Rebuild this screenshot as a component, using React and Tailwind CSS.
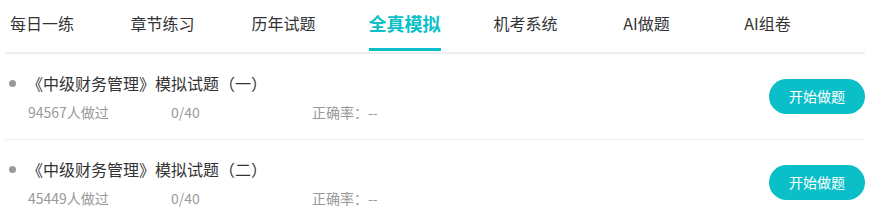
import React from 'react';

const tabs = ['每日一练', '章节练习', '历年试题', '全真模拟', '机考系统', 'AI做题', 'AI组卷'];
const activeTab = 3;

const papers = [
  { id: 1, title: '《中级财务管理》模拟试题（一）', count: 94567, done: 0, total: 40 },
  { id: 2, title: '《中级财务管理》模拟试题（二）', count: 45449, done: 0, total: 40 },
];

const App = () => {
  return (
    <div className="w-[874px] min-h-[209px] bg-white font-['Noto_Sans_CJK_SC','Noto_Sans',sans-serif] text-[#333333]">
      {/* tab bar */}
      <div className="ml-[5px] flex h-[54px] w-[860px] border-b-2 border-[#eeeeee]">
        {tabs.map((tab, i) => {
          const active = i === activeTab;
          return (
            <div
              key={tab}
              className={i === 0 ? 'flex w-[97px] justify-start pl-[5px]' : 'flex w-[121px] justify-center'}
            >
              <div className="flex flex-col justify-between">
                <span
                  className={
                    active
                      ? 'pt-[11px] text-[18px] leading-[24px] font-bold text-[#0bbfc9] whitespace-nowrap'
                      : 'pt-[11px] text-[16px] leading-[24px] text-[#333333] whitespace-nowrap'
                  }
                >
                  {tab}
                </span>
                {active && <div className="mb-[1px] h-[3px] bg-[#0bbfc9]" />}
              </div>
            </div>
          );
        })}
      </div>

      {/* paper list */}
      <div className="ml-[5px] w-[860px]">
        {papers.map((p) => (
          <div key={p.id} className="flex h-[86px] items-center justify-between border-b border-[#eeeeee]">
            <div className="flex flex-col self-start pt-[18px]">
              <div className="flex items-start">
                <div className="ml-[4px] mt-[8px] h-[7px] w-[7px] rounded-full bg-[#999999]" />
                <span className="ml-[11px] text-[16px] leading-[22px] text-[#333333] whitespace-nowrap">{p.title}</span>
              </div>
              <div className="mt-[8px] flex pl-[23px] text-[14px] leading-[20px] text-[#999999]">
                <span className="w-[143px]">{p.count}人做过</span>
                <span className="w-[141px]">
                  {p.done}/{p.total}
                </span>
                <span>正确率：--</span>
              </div>
            </div>
            <button className="h-[35px] w-[96px] rounded-full bg-[#0bbfc9] text-[14px] text-white">开始做题</button>
          </div>
        ))}
      </div>
    </div>
  );
};

export default App;
